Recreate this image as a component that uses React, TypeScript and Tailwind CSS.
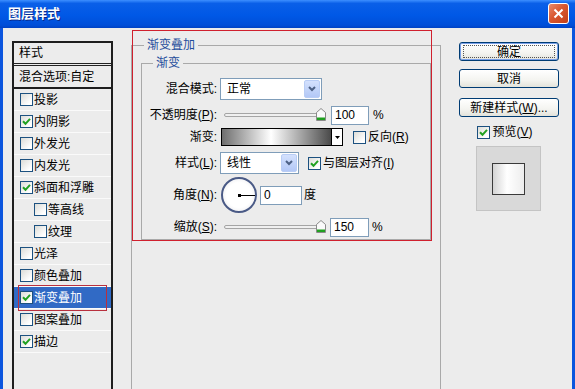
import React from "react"

type Item = { label: string; checked: boolean; indent?: boolean; selected?: boolean }

const items: Item[] = [
  { label: "投影", checked: false },
  { label: "内阴影", checked: true },
  { label: "外发光", checked: false },
  { label: "内发光", checked: false },
  { label: "斜面和浮雕", checked: true },
  { label: "等高线", checked: false, indent: true },
  { label: "纹理", checked: false, indent: true },
  { label: "光泽", checked: false },
  { label: "颜色叠加", checked: false },
  { label: "渐变叠加", checked: true, selected: true },
  { label: "图案叠加", checked: false },
  { label: "描边", checked: true },
]

function CheckBox({ checked }: { checked: boolean }) {
  return (
    <span className="flex h-[13px] w-[13px] shrink-0 items-center justify-center border border-[#1c5180] bg-[linear-gradient(135deg,#dcdcd7,#ffffff_80%)]">
      {checked && (
        <svg width="9" height="9" viewBox="0 0 9 9">
          <path d="M1 4.2 L3.5 6.8 L8 1.8" stroke="#21a121" strokeWidth="2" fill="none" />
        </svg>
      )}
    </span>
  )
}

function Combo({ value, className }: { value: string; className: string }) {
  return (
    <div className={`flex h-[22px] items-center border border-[#7f9db9] bg-white ${className}`}>
      <span className="flex-1 pl-[6px] text-[12px] leading-[14px]">{value}</span>
      <span className="m-[1px] flex h-[18px] w-[16px] items-center justify-center rounded-[2px] border border-[#b9cdf5] bg-[linear-gradient(to_bottom,#d4e1fd,#b3c8f6)]">
        <svg width="8" height="6" viewBox="0 0 8 6">
          <path d="M1 1 L4 4 L7 1" stroke="#4d6185" strokeWidth="2" fill="none" />
        </svg>
      </span>
    </div>
  )
}

function Slider() {
  return (
    <div className="relative h-[12px] w-[96px]">
      <div className="absolute left-0 right-0 top-[4px] h-[4px] rounded-full border border-[#a5a5a5] bg-[#f0f0f0]" />
      <svg className="absolute right-[-6px] top-[-1px]" width="10" height="13" viewBox="0 0 10 13">
        <path d="M0.5 4.5 L5 0.5 L9.5 4.5 L9.5 12.5 L0.5 12.5 Z" fill="#fafafa" stroke="#8a8a8a" />
        <rect x="1" y="9.5" width="8" height="2.5" fill="#21a121" />
      </svg>
    </div>
  )
}

function Field({ value, className }: { value: string; className: string }) {
  return (
    <div className={`flex h-[19px] items-center border border-[#7f9db9] bg-white pl-[3px] text-[12px] leading-[14px] ${className}`}>
      {value}
    </div>
  )
}

function Label({ text, hint }: { text: string; hint?: string }) {
  return (
    <span className="w-[75px] shrink-0 text-right text-[12px] leading-[14px]">
      {text}
      {hint && (
        <>
          (<span className="underline">{hint}</span>)
        </>
      )}
      :
    </span>
  )
}

function XPButton({ children, focused }: { children: React.ReactNode; focused?: boolean }) {
  return (
    <div
      className={`flex h-[19px] w-[100px] items-center justify-center rounded-[3px] border border-[#003c74] bg-[linear-gradient(to_bottom,#ffffff,#f4f4f0_60%,#e3e3db)] text-[12px] leading-[14px] ${focused ? "shadow-[inset_0_0_0_1px_#7aa0e8]" : ""}`}
    >
      <span className={focused ? "flex h-[13px] w-[92px] items-center justify-center border border-dotted border-[#555]" : ""}>{children}</span>
    </div>
  )
}

export default function App() {
  return (
    <div className="relative h-[389px] w-[575px] overflow-hidden bg-[#ececec] text-black [font-family:'Liberation_Sans','Noto_Sans_CJK_SC',sans-serif]">
      {/* title bar */}
      <div className="flex h-[28px] items-start justify-between bg-[linear-gradient(to_bottom,#3d8fff_0%,#0a5fe8_12%,#0058e6_55%,#004ed8_90%,#0042c4_100%)] pr-[6px] pt-[3px]">
        <span className="pl-[8px] pt-[3px] text-[13px] font-bold leading-[16px] text-white [text-shadow:1px_1px_0_#0a2a8a]">图层样式</span>
        <div className="flex h-[21px] w-[21px] items-center justify-center rounded-[3px] border border-white bg-[linear-gradient(135deg,#e98a6c,#d9572f_45%,#c23f18)]">
          <svg width="11" height="11" viewBox="0 0 11 11">
            <path d="M1.5 1.5 L9.5 9.5 M9.5 1.5 L1.5 9.5" stroke="white" strokeWidth="2" />
          </svg>
        </div>
      </div>

      {/* body */}
      <div className="flex h-[361px] items-start border-x-[3px] border-[#0b55de]">
        {/* style list */}
        <div className="ml-[9px] mt-[13px] h-[360px] w-[101px] border-2 border-[#1e1e1e]">
          <div className="flex h-[23px] items-center border-b-[3px] border-double border-[#222] pl-[5px] text-[12px] leading-[14px]">样式</div>
          <div className="flex h-[23px] items-center border-b-2 border-[#1e1e1e] pl-[5px] text-[12px] leading-[14px]">混合选项:自定</div>
          {items.map(item => (
            <div
              key={item.label}
              className={`flex h-[22px] items-center gap-[1px] border-b border-[#fafafa] text-[12px] leading-[14px] ${item.indent ? "pl-[20px]" : "pl-[6px]"} ${item.selected ? "bg-[#316ac5] text-white" : ""}`}
            >
              <CheckBox checked={item.checked} />
              <span>{item.label}</span>
            </div>
          ))}
        </div>

        {/* gradient overlay group */}
        <fieldset className="ml-[18px] mt-[11px] h-[360px] w-[310px] border border-[#a9a9a9]">
          <legend className="ml-[12px] px-[3px] text-[12px] leading-[12px] text-[#1f4e9c]">渐变叠加</legend>
          <fieldset className="mx-[9px] mt-[6px] h-[183px] border border-[#a9a9a9]">
            <legend className="ml-[11px] px-[3px] text-[12px] leading-[12px] text-[#1f4e9c]">渐变</legend>
            <div className="flex flex-col">
              <div className="mt-[9px] flex h-[22px] items-center">
                <Label text="混合模式" />
                <Combo value="正常" className="ml-[3px] w-[102px]" />
              </div>
              <div className="mt-[6px] flex h-[18px] items-center">
                <Label text="不透明度" hint="P" />
                <div className="ml-[7px]">
                  <Slider />
                </div>
                <Field value="100" className="ml-[11px] w-[38px]" />
                <span className="ml-[4px] text-[12px] leading-[14px]">%</span>
              </div>
              <div className="mt-[4px] flex h-[18px] items-center">
                <Label text="渐变" />
                <div className="ml-[4px] flex h-[18px] w-[122px] border border-black">
                  <div className="flex-1 bg-[linear-gradient(to_right,#6e6e6e,#ffffff_45%,#4a4a4a)]" />
                  <div className="flex w-[11px] items-center justify-center border-l border-black bg-white">
                    <svg width="5" height="3" viewBox="0 0 5 3">
                      <path d="M0 0 L5 0 L2.5 3 Z" fill="black" />
                    </svg>
                  </div>
                </div>
                <span className="ml-[10px]">
                  <CheckBox checked={false} />
                </span>
                <span className="ml-[2px] text-[12px] leading-[14px]">
                  反向(<span className="underline">R</span>)
                </span>
              </div>
              <div className="mt-[6px] flex h-[22px] items-center">
                <Label text="样式" hint="L" />
                <Combo value="线性" className="ml-[3px] w-[79px]" />
                <span className="ml-[9px]">
                  <CheckBox checked={true} />
                </span>
                <span className="ml-[2px] text-[12px] leading-[14px]">
                  与图层对齐(<span className="underline">I</span>)
                </span>
              </div>
              <div className="mt-[3px] flex h-[36px] items-center">
                <Label text="角度" hint="N" />
                <div className="ml-[4px] flex h-[36px] w-[36px] items-center rounded-full border-2 border-[#4a5a86] bg-[radial-gradient(circle,#ffffff_55%,#e2e2e6)]">
                  <div className="ml-[15px] h-[3px] w-[3px] bg-black" />
                  <div className="h-[1px] flex-1 bg-black" />
                </div>
                <Field value="0" className="ml-[3px] w-[42px]" />
                <span className="ml-[2px] text-[12px] leading-[14px]">度</span>
              </div>
              <div className="mt-[5px] flex h-[18px] items-center">
                <Label text="缩放" hint="S" />
                <div className="ml-[7px]">
                  <Slider />
                </div>
                <Field value="150" className="ml-[10px] w-[39px]" />
                <span className="ml-[3px] text-[12px] leading-[14px]">%</span>
              </div>
            </div>
          </fieldset>
        </fieldset>

        {/* buttons */}
        <div className="ml-[18px] mt-[14px] flex w-[100px] flex-col">
          <XPButton focused>确定</XPButton>
          <div className="mt-[8px]">
            <XPButton>取消</XPButton>
          </div>
          <div className="mt-[10px]">
            <XPButton>
              新建样式(<span className="underline">W</span>)...
            </XPButton>
          </div>
          <div className="mt-[8px] flex items-center justify-center gap-[2px] pr-[8px]">
            <CheckBox checked={true} />
            <span className="text-[12px] leading-[14px]">
              预览(<span className="underline">V</span>)
            </span>
          </div>
          <div className="ml-[17px] mt-[7px] flex h-[65px] w-[65px] items-center justify-center border border-[#c4c4c4] bg-[#d9d9d9]">
            <div className="h-[32px] w-[33px] border border-[#3a3a3a] bg-[linear-gradient(to_right,#d4d4d4,#ffffff_45%,#ededed)]" />
          </div>
        </div>
      </div>

      {/* red annotation marks */}
      <div className="absolute left-[132px] top-[30px] h-[211px] w-[300px] border border-[#d0202e]" />
      <div className="absolute left-[18px] top-[285px] h-[26px] w-[89px] border border-[#b8303e]" />
    </div>
  )
}
